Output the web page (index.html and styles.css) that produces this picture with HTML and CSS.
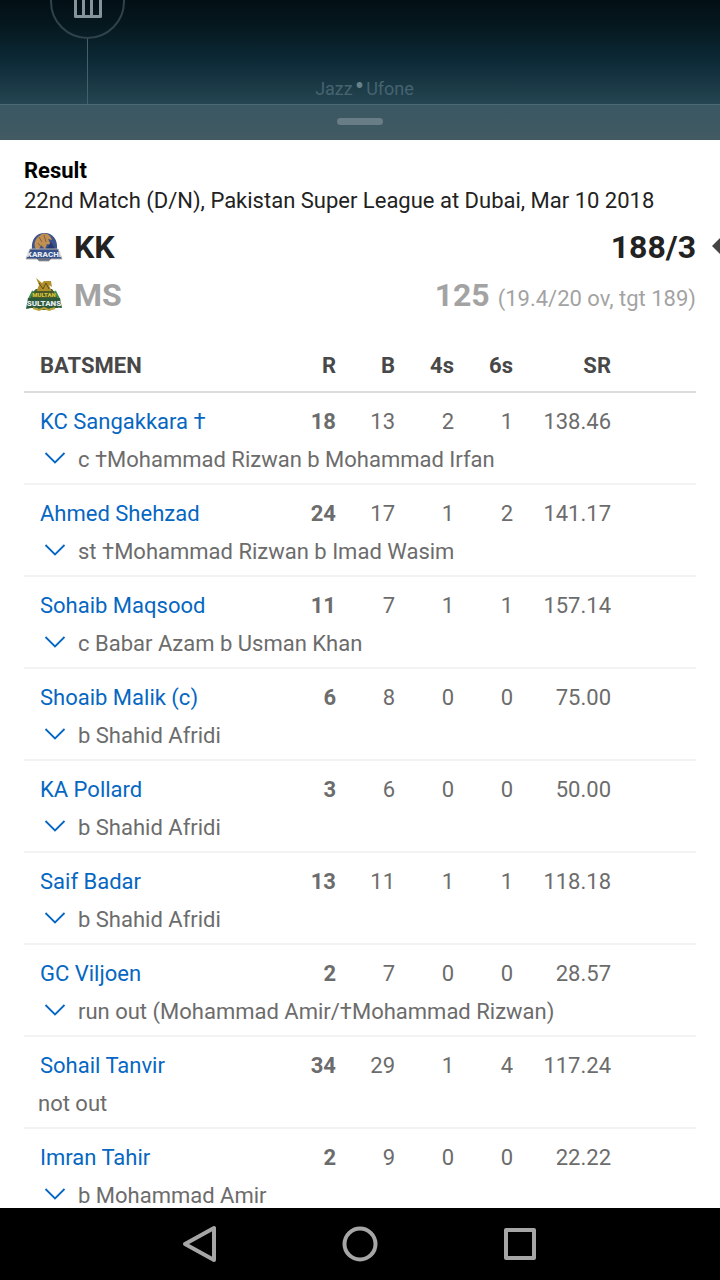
FILE: index.html
```
<!DOCTYPE html>
<html lang="en">
<head>
    <meta charset="UTF-8">
    <meta name="viewport" content="width=device-width, initial-scale=1.0">
    <title>Scorecard</title>
    <link rel="stylesheet" href="styles.css">
</head>
<body>
    <header class="shade">
        <div class="shade-top">
            <div class="tool">
                <button class="tool-btn" aria-label="Clear">
                    <svg width="71" height="71" viewBox="0 0 71 71" fill="none" stroke="#87939a" stroke-width="3" stroke-linejoin="round">
                        <path d="M23.5 18V50.5H48.5V18M31.5 18V50M39.5 18V50"/>
                    </svg>
                </button>
                <div class="tool-line"></div>
            </div>
            <p class="carrier">Jazz<span class="dot">•</span>Ufone</p>
        </div>
        <div class="shade-bottom">
            <div class="handle"></div>
        </div>
    </header>

    <main class="content">
        <section class="match">
            <h1>Result</h1>
            <p>22nd Match (D/N), Pakistan Super League at Dubai, Mar 10 2018</p>
        </section>

        <section class="teams">
            <div class="team">
                <svg class="logo" width="40" height="40" viewBox="0 0 40 40">
                    <path d="M8 23C7 12 12 6 21 6C29 6 34 13 33 22L34 27H6Z" fill="#3c538c"/>
                    <path d="M12 22C9 18 11 12 15 9L18 7C23 5 27 9 28 13L24 12L27 18L23 17L21 22L17 18L15 22Z" fill="#c08f52"/>
                    <path d="M15 10L18 15M20 8L22 15M14 16L17 20" stroke="#875f45" fill="none"/>
                    <path d="M27 15L31 22H22Z" fill="#243a70"/>
                    <path d="M6 22H34L38 32H27L25 34H15L13 32H2Z" fill="#34508a" stroke="#b4b0aa"/>
                    <text x="20" y="30" class="logo-text logo-text-kk">KARACHI</text>
                    <path d="M14 32H26" stroke="#a08a70"/>
                </svg>
                <h2>KK</h2>
                <div class="score">188/3</div>
                <svg class="marker" width="8" height="16" viewBox="0 0 8 16">
                    <path d="M8 0V16L0 8Z" fill="#444"/>
                </svg>
            </div>
            <div class="team team-out">
                <svg class="logo" width="40" height="40" viewBox="0 0 40 40">
                    <path d="M9 17L12 14H28L31 18L35 25L34 33H6L5 25Z" fill="#315f38"/>
                    <path d="M13 15L15 10L12 3L18 8L20 6L27 6L28 12L25 10L28 17H12Z" fill="#b0902a"/>
                    <path d="M15 8L19 14L22 8L25 14" stroke="#604d1c" fill="none"/>
                    <path d="M10 16H30L32 23H8Z" fill="#4a5a28"/>
                    <path d="M9 16L5 24M31 16L35 24" stroke="#3f8a45" stroke-width="2"/>
                    <text x="20" y="22" class="logo-text logo-text-multan">MULTAN</text>
                    <path d="M4 23H36L38 33L28 32L25 35H15L12 32L2 34Z" fill="#2c5a38"/>
                    <path d="M9 33L15 35L20 33L25 35L31 33" stroke="#bba338" stroke-width="2" fill="none"/>
                    <text x="20" y="31" class="logo-text logo-text-ms">SULTANS</text>
                </svg>
                <h2>MS</h2>
                <div class="score">125 <span class="overs">(19.4/20 ov, tgt 189)</span></div>
            </div>
        </section>

        <table class="batting">
            <colgroup>
                <col>
                <col class="col-num">
                <col class="col-num">
                <col class="col-num">
                <col class="col-num">
                <col class="col-sr">
                <col class="col-end">
            </colgroup>
            <thead>
                <tr>
                    <th class="name">BATSMEN</th>
                    <th>R</th>
                    <th>B</th>
                    <th>4s</th>
                    <th>6s</th>
                    <th>SR</th>
                    <td></td>
                </tr>
            </thead>
            <tbody id="batsmen"></tbody>
        </table>
    </main>

    <nav class="navbar">
        <button aria-label="Back">
            <svg width="40" height="40" viewBox="0 0 40 40"><path d="M5 20L34 4V36Z"/></svg>
        </button>
        <button aria-label="Home">
            <svg width="40" height="40" viewBox="0 0 40 40"><circle cx="20" cy="20" r="15.5"/></svg>
        </button>
        <button aria-label="Recent apps">
            <svg width="40" height="40" viewBox="0 0 40 40"><rect x="6" y="6" width="28" height="28"/></svg>
        </button>
    </nav>

    <script src="script.js"></script>
</body>
</html>
```
FILE: styles.css
```
* {
    margin: 0;
    padding: 0;
    box-sizing: border-box;
}

body {
    display: flex;
    flex-direction: column;
    height: 100vh;
    font-family: Roboto, "Liberation Sans", sans-serif;
    font-size: 22px;
    line-height: 26px;
    color: #222;
    background: #fff;
    overflow: hidden;
}

button {
    border: none;
    background: none;
    cursor: pointer;
}

svg {
    display: block;
}

/* pulled-down shade */
.shade {
    flex: none;
    background: linear-gradient(#020f14 0%, #061920 20%, #0d2b38 45%, #1d3d49 65%, #254552 74%, #30484f 100%);
}

.shade-top {
    display: grid;
    height: 105px;
    overflow: hidden;
    border-bottom: 1px solid #4a6973;
}

.shade-top > * {
    grid-area: 1 / 1;
}

.tool {
    display: flex;
    flex-direction: column;
    align-items: center;
    justify-self: start;
    margin-top: -36px;
    margin-left: 50px;
}

.tool-btn {
    width: 75px;
    height: 75px;
    border: 2px solid #2f434b;
    border-radius: 50%;
}

.tool-line {
    flex: 1;
    width: 1px;
    background: #456069;
}

.carrier {
    align-self: end;
    justify-self: center;
    padding: 0 0 2px 9px;
    font-size: 18px;
    color: #466370;
}

.dot {
    margin: 0 2px;
    font-size: 28px;
    line-height: 18px;
    color: #67818a;
}

.shade-bottom {
    height: 35px;
    padding-top: 13px;
    background: rgba(118, 145, 155, 0.25);
}

.handle {
    width: 46px;
    height: 7px;
    margin: 0 auto;
    border-radius: 4px;
    background: #687d85;
}

/* scorecard */
.content {
    flex: 1;
    min-height: 0;
    padding: 16px 24px 0;
    overflow: hidden;
}

.match {
    line-height: 30px;
}

.match h1 {
    font-size: 22px;
    font-weight: 700;
    color: #000;
}

.teams {
    margin-top: 7px;
}

.team {
    position: relative;
    display: flex;
    align-items: center;
    height: 48px;
}

.logo {
    margin-right: 10px;
}

.logo-text {
    font-family: Roboto, sans-serif;
    font-weight: 900;
    text-anchor: middle;
    fill: #e6eaf0;
}

.logo-text-kk {
    font-size: 8px;
}

.logo-text-multan {
    font-size: 6px;
    fill: #d6c63c;
}

.logo-text-ms {
    font-size: 8px;
}

.team h2,
.score {
    font-size: 32px;
    font-weight: 700;
}

.score {
    margin-left: auto;
}

.team-out {
    color: #a3a3a3;
}

.overs {
    font-size: 22px;
    font-weight: 400;
    line-height: 16px;
}

.marker {
    position: absolute;
    top: 15px;
    right: -24px;
}

.batting {
    width: 100%;
    margin-top: 20px;
    table-layout: fixed;
    border-collapse: separate;
    border-spacing: 0;
    color: #6c6c6c;
}

.col-num {
    width: 59px;
}

.col-sr {
    width: 98px;
}

.col-end {
    width: 85px;
}

.batting th,
.batting td {
    text-align: right;
}

.batting .name {
    padding-left: 16px;
    text-align: left;
    white-space: nowrap;
}

.batting thead th,
.batting thead td {
    padding-top: 14px;
    padding-bottom: 12px;
    border-bottom: 2px solid #dcdcdc;
    color: #484848;
}

.stats td {
    padding-top: 16px;
    padding-bottom: 6px;
}

.stats a {
    color: #0667c2;
    text-decoration: none;
}

.runs {
    font-weight: 700;
}

.batting .how-out {
    padding: 6px 0 10px 14px;
    border-bottom: 2px solid #f3f3f3;
    text-align: left;
}

.dismissal {
    display: flex;
    align-items: center;
}

.toggle {
    margin-right: 6px;
}

/* system navigation */
.navbar {
    display: flex;
    flex: none;
    align-items: center;
    justify-content: center;
    gap: 120px;
    height: 72px;
    background: #000;
}

.navbar svg {
    fill: none;
    stroke: #a6a6a6;
    stroke-width: 4px;
    stroke-linejoin: round;
}
```
FILE: script.js
```
const batsmen = [
    ['KC Sangakkara †', 18, 13, 2, 1, '138.46', 'c †Mohammad Rizwan b Mohammad Irfan'],
    ['Ahmed Shehzad', 24, 17, 1, 2, '141.17', 'st †Mohammad Rizwan b Imad Wasim'],
    ['Sohaib Maqsood', 11, 7, 1, 1, '157.14', 'c Babar Azam b Usman Khan'],
    ['Shoaib Malik (c)', 6, 8, 0, 0, '75.00', 'b Shahid Afridi'],
    ['KA Pollard', 3, 6, 0, 0, '50.00', 'b Shahid Afridi'],
    ['Saif Badar', 13, 11, 1, 1, '118.18', 'b Shahid Afridi'],
    ['GC Viljoen', 2, 7, 0, 0, '28.57', 'run out (Mohammad Amir/†Mohammad Rizwan)'],
    ['Sohail Tanvir', 34, 29, 1, 4, '117.24', 'not out'],
    ['Imran Tahir', 2, 9, 0, 0, '22.22', 'b Mohammad Amir']
];

const toggle = `
    <button class="toggle" aria-label="Show dismissal">
        <svg width="34" height="24" viewBox="0 0 34 24" fill="none" stroke="#0667c2" stroke-width="1.8">
            <path d="M7.5 5L17 14.5L26.5 5"/>
        </svg>
    </button>`;

document.getElementById('batsmen').innerHTML = batsmen.map(([name, r, b, fours, sixes, sr, out]) => `
    <tr class="stats">
        <td class="name"><a href="#">${name}</a></td>
        <td class="runs">${r}</td>
        <td>${b}</td>
        <td>${fours}</td>
        <td>${sixes}</td>
        <td>${sr}</td>
        <td></td>
    </tr>
    <tr>
        <td class="how-out" colspan="7">
            <div class="dismissal">${out === 'not out' ? '' : toggle}<span>${out}</span></div>
        </td>
    </tr>
`).join('');
```
